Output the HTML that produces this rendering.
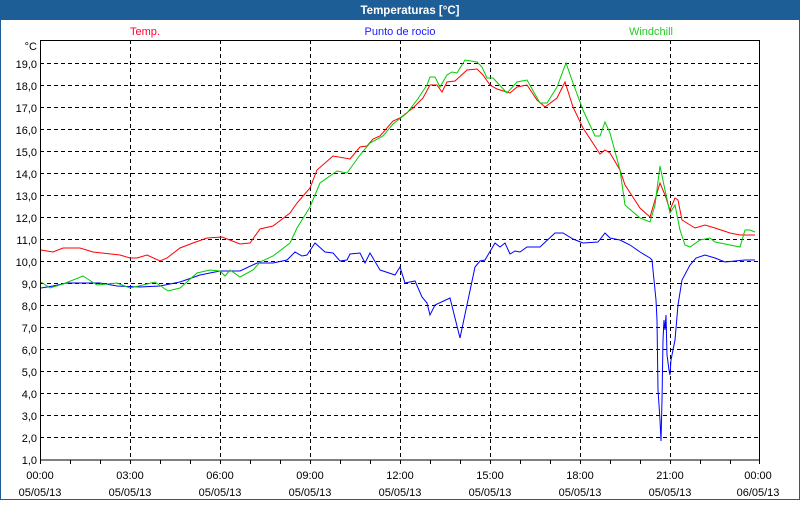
<!DOCTYPE html>
<html><head><meta charset="utf-8"><style>
body{margin:0;width:800px;height:500px;overflow:hidden;background:#fff;font-family:"Liberation Sans",sans-serif}
</style></head><body>
<svg width="800" height="500" xmlns="http://www.w3.org/2000/svg" font-family="Liberation Sans, sans-serif" font-size="11">
<rect x="0" y="0" width="800" height="500" fill="#fff"/>
<rect x="0.5" y="0.5" width="799" height="499" fill="none" stroke="#1d5e96"/>
<rect x="0" y="0" width="800" height="20" fill="#1d5e96"/>
<text x="410" y="14" fill="#fff" font-weight="bold" font-size="11.5" text-anchor="middle">Temperaturas [°C]</text>
<text x="145" y="35" fill="#ff0033" text-anchor="middle">Temp.</text>
<text x="400" y="35" fill="#1a1aff" text-anchor="middle">Punto de rocio</text>
<text x="651" y="35" fill="#22cc22" text-anchor="middle">Windchill</text>
<g stroke="#000" stroke-dasharray="4,3" stroke-width="1">
<path d="M40 63.5H760M40 85.5H760M40 107.5H760M40 129.5H760M40 151.5H760M40 173.5H760M40 195.5H760M40 217.5H760M40 239.5H760M40 261.5H760M40 283.5H760M40 305.5H760M40 327.5H760M40 349.5H760M40 371.5H760M40 393.5H760M40 415.5H760M40 437.5H760"/>
<path d="M130.5 40V460M220.5 40V460M310.5 40V460M400.5 40V460M490.5 40V460M580.5 40V460M670.5 40V460"/>
</g>
<rect x="40.5" y="40.5" width="719" height="419.5" fill="none" stroke="#000"/>
<path stroke="#000" d="M40.5 460v4M70.5 460v4M100.5 460v4M130.5 460v4M160.5 460v4M190.5 460v4M220.5 460v4M250.5 460v4M280.5 460v4M310.5 460v4M340.5 460v4M370.5 460v4M400.5 460v4M430.5 460v4M460.5 460v4M490.5 460v4M520.5 460v4M550.5 460v4M580.5 460v4M610.5 460v4M640.5 460v4M670.5 460v4M700.5 460v4M730.5 460v4M759.5 460v4"/>
<g text-anchor="end" fill="#000">
<text x="37" y="50">°C</text>
<text x="37" y="68">19,0</text><text x="37" y="90">18,0</text><text x="37" y="112">17,0</text><text x="37" y="134">16,0</text><text x="37" y="156">15,0</text><text x="37" y="178">14,0</text><text x="37" y="200">13,0</text><text x="37" y="222">12,0</text><text x="37" y="244">11,0</text><text x="37" y="266">10,0</text><text x="37" y="288">9,0</text><text x="37" y="310">8,0</text><text x="37" y="332">7,0</text><text x="37" y="354">6,0</text><text x="37" y="376">5,0</text><text x="37" y="398">4,0</text><text x="37" y="420">3,0</text><text x="37" y="442">2,0</text><text x="37" y="464">1,0</text>
</g>
<g text-anchor="middle" fill="#000">
<text x="40" y="479">00:00</text><text x="40" y="496">05/05/13</text>
<text x="130" y="479">03:00</text><text x="130" y="496">05/05/13</text>
<text x="220" y="479">06:00</text><text x="220" y="496">05/05/13</text>
<text x="310" y="479">09:00</text><text x="310" y="496">05/05/13</text>
<text x="400" y="479">12:00</text><text x="400" y="496">05/05/13</text>
<text x="490" y="479">15:00</text><text x="490" y="496">05/05/13</text>
<text x="580" y="479">18:00</text><text x="580" y="496">05/05/13</text>
<text x="670" y="479">21:00</text><text x="670" y="496">05/05/13</text>
<text x="758" y="479">00:00</text><text x="758" y="496">06/05/13</text>
</g>
<g fill="none" stroke-width="1">
<polyline stroke="#0000ff" points="41,288 53,286 67,283 100,283 117,286 140,287 160,286 180,282 200,275 220,271 240,271 257,263 273,263 287,260 295,252 302,256 307,255 315,243 325,252 333,253 340,261 347,260 350,254 360,253 365,263 370,253 380,270 395,275 400,267 405,283 415,281 422,297 427,303 430,315 435,305 450,298 460,338 475,267 480,261 485,260 495,243 500,247 505,243 510,254 515,251 520,252 527,247 540,247 555,233 563,233 573,239 583,243 598,242 605,233 610,238 620,240 630,245 640,252 650,258 652,260 654,280 656,300 657,320 658,390 660,420 661,441 662,400 663,340 664,320 665,330 666,315 667,355 669,370 670,375 671,360 675,340 678,305 682,280 690,265 696,258 705,255 715,258 725,262 745,260 755,260"/>
<polyline stroke="#ff0000" points="41,250 53,252 63,248 80,248 93,252 120,255 130,258 137,258 147,255 160,261 167,258 180,248 193,243 207,238 222,237 240,244 250,243 260,229 273,226 290,213 297,203 310,188 317,170 333,156 350,159 360,147 367,146 373,139 380,136 393,121 400,118 413,108 423,98 430,85 437,85 442,92 447,82 455,81 467,70 477,69 483,75 490,85 497,89 510,93 517,87 527,85 537,100 545,107 557,98 565,82 573,107 583,128 600,154 605,150 610,153 620,170 625,185 640,208 650,217 655,200 660,183 665,195 670,210 675,198 678,200 682,220 695,228 705,225 715,228 730,233 740,235 750,235 755,235"/>
<polyline stroke="#00cc00" points="41,282 50,288 63,284 83,276 97,285 117,283 130,288 143,285 155,282 168,291 180,288 197,273 210,270 220,271 225,276 230,270 240,277 253,270 260,262 273,256 290,243 297,228 310,207 320,183 337,171 347,173 360,155 370,143 383,136 393,124 407,113 417,100 427,85 430,77 435,77 440,87 447,75 452,72 457,73 465,60 477,62 482,67 487,78 493,78 507,93 517,82 527,80 540,103 547,103 557,87 566,63 573,83 583,110 595,136 600,136 605,122 610,133 620,170 625,205 640,218 650,222 655,205 660,166 665,190 670,213 675,205 680,230 685,245 690,247 700,240 710,238 715,242 730,245 740,247 745,230 750,230 755,232"/>
</g>
</svg>
</body></html>
